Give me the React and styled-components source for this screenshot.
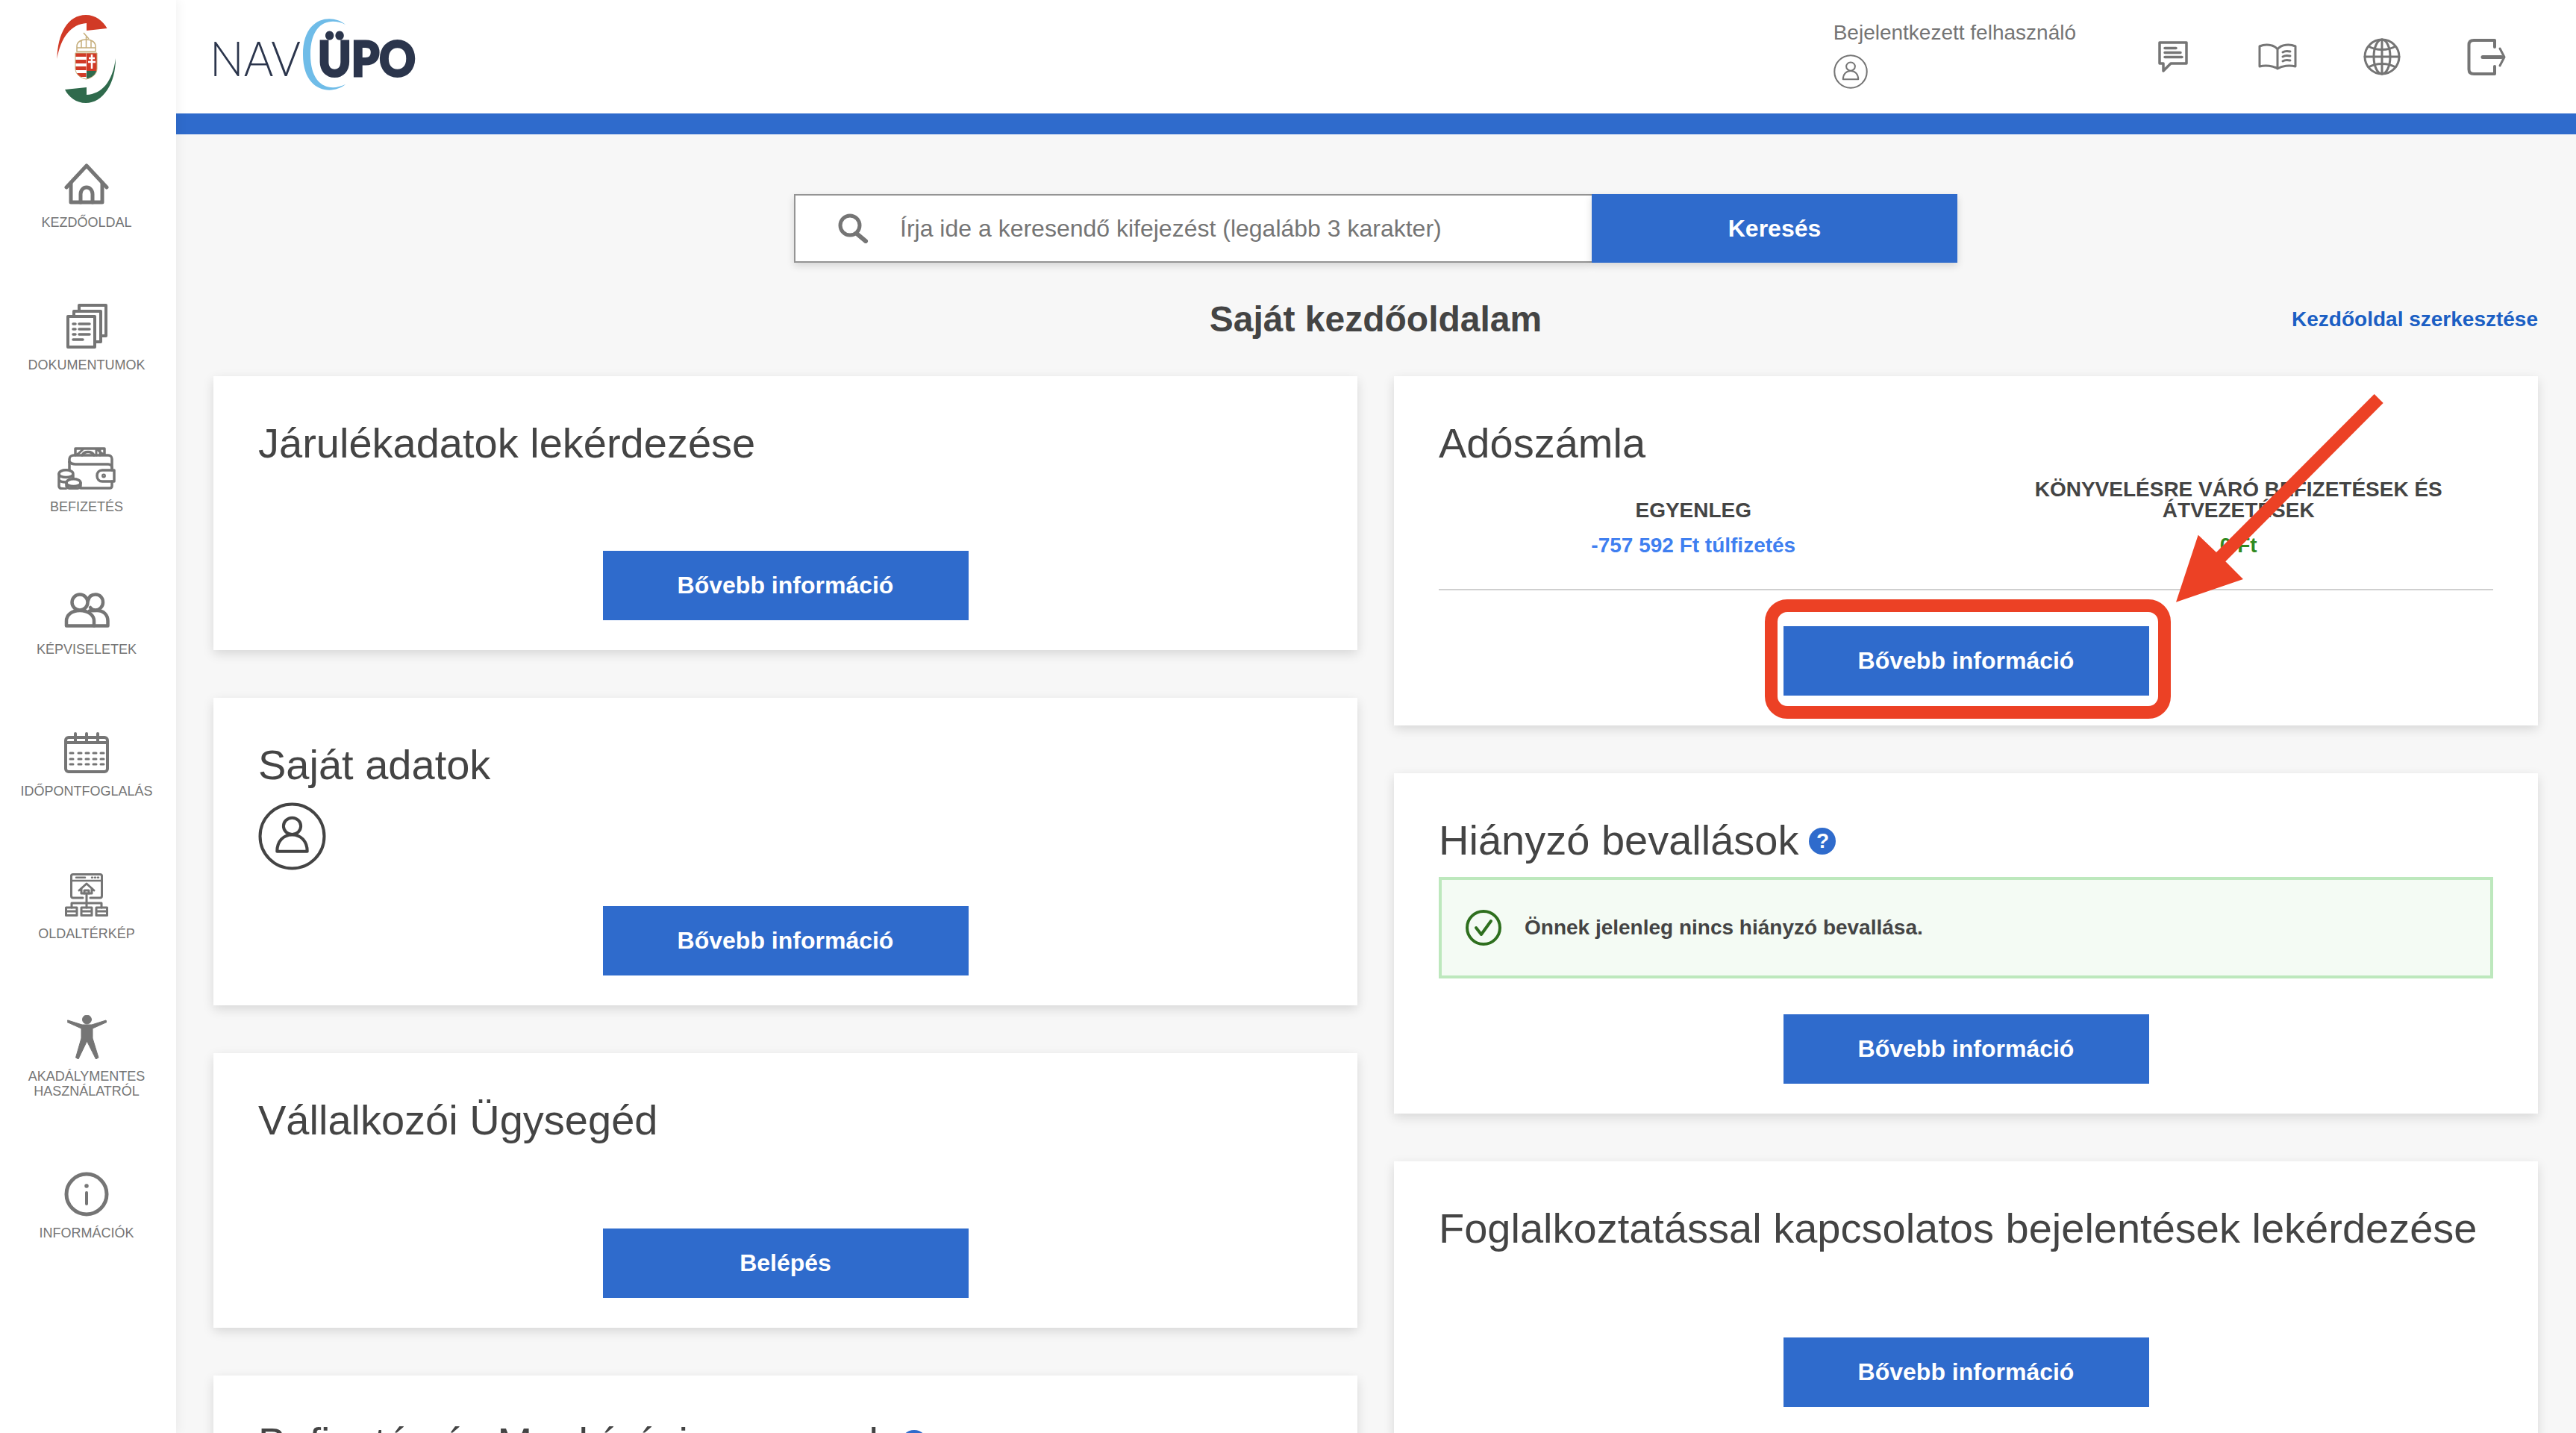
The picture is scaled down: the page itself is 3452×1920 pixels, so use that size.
import React from 'react'
import styled, { createGlobalStyle } from 'styled-components'

const GlobalStyle = createGlobalStyle`
html, body {
  margin: 0;
  padding: 0;
  background: #f7f7f7;
}
* {
  box-sizing: border-box;
}
`

const Page = styled.div`
width: 3452px;
height: 1920px;
overflow: hidden;
display: flex;
font-family: "Liberation Sans", Arial, sans-serif;
color: #444;
background: #f7f7f7;
`

const Sidebar = styled.aside`
width: 236px;
flex: none;
background: #fff;
box-shadow: 3px 0 14px rgba(0, 0, 0, 0.05);
padding: 20px 4px 0 0;
display: flex;
flex-direction: column;
align-items: center;
z-index: 2;
`

const Crest = styled.svg`
width: 80px;
height: 118px;
margin-bottom: 78px;
flex: none;
`

const NavList = styled.nav`
display: flex;
flex-direction: column;
align-items: center;
gap: 98.6px;
`

const NavItem = styled.a`
width: 232px;
display: flex;
flex-direction: column;
align-items: center;
gap: 12px;
color: #757575;
text-decoration: none;
`

const NavIcon = styled.div`
height: 60px;
display: flex;
align-items: center;
justify-content: center;
color: #757575;
`

const NavLabel = styled.span`
font-size: 18px;
line-height: 20px;
text-align: center;
text-transform: uppercase;
color: #757575;
`

const Main = styled.div`
flex: 1;
min-width: 0;
display: flex;
flex-direction: column;
`

const Header = styled.header`
height: 152px;
flex: none;
background: #fff;
padding: 0 50px 0 49px;
display: flex;
align-items: center;
justify-content: space-between;
`

const Logo = styled.svg`
width: 276px;
height: 104px;
margin-top: -4px;
overflow: visible;
`

const HeaderRight = styled.div`
display: flex;
align-items: center;
gap: 60px;
`

const UserBlock = styled.div`
display: flex;
flex-direction: column;
align-items: flex-start;
gap: 13px;
color: #757575;
font-size: 28px;
line-height: 32px;
margin-top: -6px;
`

const HeaderIcons = styled.div`
display: flex;
`

const HeaderIcon = styled.a`
width: 140px;
display: flex;
align-items: center;
justify-content: center;
color: #757575;
`

const BlueBar = styled.div`
height: 28px;
flex: none;
background: #2f6bcc;
`

const Content = styled.main`
flex: 1;
padding: 80px 51px 0 50px;
background: #f7f7f7;
`

const SearchRow = styled.form`
display: flex;
justify-content: center;
`

const SearchBox = styled.div`
width: 1069px;
height: 92px;
background: #fff;
border: 2px solid #949494;
border-right: none;
display: flex;
align-items: center;
padding-left: 57px;
gap: 42px;
box-shadow: 0 4px 10px rgba(0, 0, 0, 0.14);
color: #757575;
font-size: 32px;
`

const PrimaryButton = styled.button`
width: 490px;
height: 93px;
flex: none;
border: none;
padding: 0;
background: #2f6bcc;
color: #fff;
font-family: inherit;
font-size: 32px;
font-weight: 700;
`

const SearchButton = styled(PrimaryButton)`
height: 92px;
box-shadow: 0 4px 10px rgba(0, 0, 0, 0.14);
`

const TitleRow = styled.div`
height: 152px;
display: grid;
grid-template-columns: 1fr auto 1fr;
align-items: center;
`

const PageTitle = styled.h1`
grid-column: 2;
margin: 0;
font-size: 48px;
line-height: 56px;
font-weight: 700;
color: #444;
`

const EditLink = styled.a`
justify-self: end;
font-size: 28px;
font-weight: 700;
color: #1b5fc4;
`

const Columns = styled.div`
display: grid;
grid-template-columns: 1fr 1fr;
gap: 49px;
align-items: start;
`

const Column = styled.div`
display: flex;
flex-direction: column;
gap: 64px;
`

const Card = styled.section`
position: relative;
background: #fff;
padding: 56px 60px 40px;
box-shadow: 0 5px 14px rgba(0, 0, 0, 0.13);
`

const CardTitle = styled.h2`
margin: 0 0 -4px;
font-size: 56px;
line-height: 68px;
font-weight: 400;
color: #444;
display: flex;
align-items: center;
gap: 14px;
`

const HelpBadge = styled.span`
width: 36px;
height: 36px;
flex: none;
margin-top: 2px;
border-radius: 50%;
background: #2f6bcc;
color: #fff;
font-size: 28px;
line-height: 36px;
font-weight: 700;
text-align: center;
`

const Actions = styled.div`
margin-top: ${props => props.$gap}px;
display: flex;
justify-content: center;
`

const ButtonSlot = styled.div`
position: relative;
display: flex;
`

const RedFrame = styled.div`
position: absolute;
left: -25px;
right: -29px;
top: -36px;
bottom: -31px;
border: 17px solid #ec4125;
border-radius: 30px;
pointer-events: none;
`

const Arrow = styled.svg`
position: absolute;
left: 1040px;
top: 20px;
width: 290px;
height: 290px;
pointer-events: none;
`

const Avatar = styled.div`
margin-top: 20px;
height: 92px;
color: #444;
`

const Balance = styled.div`
margin-top: 18px;
padding-bottom: 44px;
border-bottom: 2px solid #cfcfcf;
display: grid;
grid-template-columns: 1fr 1fr;
gap: 48px;
align-items: end;
text-align: center;
`

const BalanceLabel = styled.div`
font-size: 28px;
line-height: 28px;
font-weight: 700;
color: #444;
text-transform: uppercase;
`

const BalanceValue = styled.div`
margin-top: 19px;
font-size: 28px;
line-height: 28px;
font-weight: 700;
color: ${props => props.$color};
`

const Notice = styled.div`
margin-top: 19px;
height: 136px;
border: 4px solid #bde8bd;
background: #f4fbf4;
padding-left: 32px;
display: flex;
align-items: center;
gap: 31px;
font-size: 28px;
font-weight: 700;
color: #444;
`

const Icon = styled.svg`
display: block;
fill: none;
stroke: currentColor;
stroke-linecap: round;
stroke-linejoin: round;
`

const HomeIcon = () => (
  <Icon width="60" height="55" viewBox="0 0 60 55" strokeWidth="5">
    <path d="M3 32 L30 3 L57 32" />
    <path d="M9 26 V52 H51 V26" />
    <path d="M22 52 V41 a8 9 0 0 1 16 0 V52" />
  </Icon>
)

const DocsIcon = () => (
  <Icon width="55" height="60" viewBox="0 0 55 60" strokeWidth="4" strokeLinejoin="miter">
    <path d="M2 17 H38 V58 H2 Z" />
    <path d="M10 15 V10 H46 V51 H40" />
    <path d="M17 8 V2 H53 V43 H48" />
    <path d="M9 27 H12 M17 27 H31 M9 34 H12 M17 34 H31 M9 41 H12 M17 41 H31 M9 48 H22" strokeWidth="3.5" />
  </Icon>
)

const WalletIcon = () => (
  <Icon width="78" height="57" viewBox="0 0 78 57" strokeWidth="3.5">
    <path d="M24 10 V2 H63 V10" />
    <path d="M24 11 C30 8 33 4 34 3 M63 10 C58 8 55 5 54 3 M52 3 V11 M57 3 V11" strokeWidth="3" />
    <path d="M33 11 C36 5 46 5 49 11" />
    <path d="M16 20 V16 C16 13 19 11 22 11 H68 C71 11 73 13 73 16 V31" />
    <path d="M16 20 C18 22 20 23 24 23 H68 C71 23 73 25 73 28" />
    <path d="M16 20 V31 M31 55 H70 C72 55 73 54 73 52 V46" />
    <path d="M60 31 H76 V46 H60 C56 46 53 43 53 38.5 C53 34 56 31 60 31 Z" />
    <circle cx="62" cy="38.5" r="1.2" />
    <path d="M2 36 C2 29 21 29 21 36 C21 42 2 42 2 36 Z" />
    <path d="M2 36 V52 C2 56 6 56 11 56 M21 38 V42 M2 44 C4 47 8 47 11 47" />
    <path d="M12 48 C12 41 31 41 31 48 C31 54 12 54 12 48 Z" />
    <path d="M12 48 V52 C12 57 31 57 31 52 V48" />
  </Icon>
)

const PeopleIcon = () => (
  <Icon width="61" height="47" viewBox="0 0 61 47" strokeWidth="4.5">
    <ellipse cx="21" cy="13" rx="10.5" ry="10.5" />
    <path d="M32 11 C33 5 37 2.500 42 2.500 C48 2.500 52 7 52 13 C52 19 47 23.500 42 23.500 C39 23.500 36.500 22 35 20" />
    <path d="M3 44.500 V38 C3 30 10 24 21 24 C32 24 40 30 40 38 V44.500 Z" />
    <path d="M34 24.500 C36 24 40 24 44 24 C53 24 58.500 30 58.500 38 V44.500 H40" />
  </Icon>
)

const CalendarIcon = () => (
  <Icon width="60" height="55" viewBox="0 0 60 55" strokeWidth="4">
    <rect x="2" y="7" width="56" height="46" rx="4" />
    <path d="M2 14 H58" />
    <path d="M15 2 V13 M30 2 V13 M45 2 V13" />
    <path d="M8 28 H12 M19 28 H23 M29 28 H33 M39 28 H43 M49 28 H53 M8 36 H12 M19 36 H23 M29 36 H33 M39 36 H43 M49 36 H53 M8 43 H12 M19 43 H23 M29 43 H33 M39 43 H43 M49 43 H53" strokeWidth="3" />
  </Icon>
)

const SitemapIcon = () => (
  <Icon width="58" height="58" viewBox="0 0 58 58" strokeWidth="3">
    <path d="M24 33 H11 C9.500 33 8.500 32 8.500 30.500 V3.500 C8.500 2 9.500 1.500 11 1.500 H47 C48.500 1.500 49.500 2 49.500 3.500 V30.500 C49.500 32 48.500 33 47 33 H34" />
    <path d="M8.500 10 H49.500 M15 5.700 H27 M36 5.700 H37 M40 5.700 H41 M44 5.700 H45" strokeWidth="2.500" />
    <path d="M19 23 L29 14 L39 23 M22 21 V27 H36 V21" />
    <path d="M26 27 V23 H32 V27" />
    <path d="M29 27 V46 M9 46 V40 H49 V46" />
    <path d="M1.500 46 H16 V56.500 H1.500 Z M22 46 H36 V56.500 H22 Z M42 46 H56.500 V56.500 H42 Z M1.500 51 H16 M22 51 H36 M42 51 H56.500" />
  </Icon>
)

const AccessIcon = () => (
  <Icon width="53" height="59" viewBox="0 0 53 59" stroke="none" style={{ fill: '#757575' }}>
    <circle cx="26.500" cy="6" r="6" />
    <path d="M1 7 L20 13 H33 L52 7 L53 9.500 L34 18 V31 L42 57 L38.500 59 L26.500 35 L15 59 L11.500 57 L19 31 V18 L0 9.500 Z" />
  </Icon>
)

const InfoIcon = () => (
  <Icon width="60" height="60" viewBox="0 0 60 60" strokeWidth="5">
    <circle cx="30" cy="30" r="27" />
    <path d="M30 28 V43" strokeWidth="4" />
    <circle cx="30" cy="19" r="1.500" strokeWidth="2.500" />
  </Icon>
)

const UserIcon = ({ size, weight }) => (
  <Icon width={size} height={size} viewBox="0 0 90 90" strokeWidth={weight}>
    <circle cx="45" cy="45" r="42.500" />
    <ellipse cx="45" cy="31.500" rx="11.500" ry="11" />
    <path d="M25 65 C25 52 33 43 45 43 C57 43 65 52 65 65 Z" />
  </Icon>
)

const ChatIcon = () => (
  <Icon width="40" height="42" viewBox="0 0 40 42" strokeWidth="3.500" strokeLinejoin="miter" strokeLinecap="butt">
    <path d="M2 2 H38 V30 H17 L7 40 V30 H2 Z" />
    <path d="M9 9.500 H24 M9 15.500 H30 M9 21.500 H32" />
  </Icon>
)

const BookIcon = () => (
  <Icon width="52" height="36" viewBox="0 0 52 36" strokeWidth="3">
    <path d="M26 8 C21 1 9 1 2 4 V31 C10 29 20 30 26 34 C32 30 42 29 50 31 V4 C43 1 31 1 26 8 V34" />
    <path d="M33 12 C36 10 39 10 43 11 M33 18 C36 16 39 16 43 17 M33 24 C36 22 39 22 43 23" />
  </Icon>
)

const GlobeIcon = () => (
  <Icon width="50" height="50" viewBox="0 0 50 50" strokeWidth="3">
    <circle cx="25" cy="25" r="23" />
    <ellipse cx="25" cy="25" rx="11" ry="23" />
    <path d="M25 2 V48 M2 25 H48" />
    <path d="M7 11 C17 17 33 17 43 11 M7 39 C17 33 33 33 43 39" />
  </Icon>
)

const ExitIcon = () => (
  <Icon width="52" height="51" viewBox="0 0 52 51" strokeWidth="4">
    <path d="M37 12 V3 H9 C5 3 2.500 5 2.500 9 V42 C2.500 46 5 48 9 48 H37 V38" />
    <path d="M21 25.500 H46" strokeWidth="5" />
    <path d="M44 14 L50 25.500 L44 37" strokeWidth="3" />
  </Icon>
)

const SearchIcon = () => (
  <Icon width="41" height="40" viewBox="0 0 41 40" strokeWidth="5">
    <circle cx="16" cy="16" r="13" />
    <path d="M25 27 L37 37" strokeWidth="6" />
  </Icon>
)

const CheckIcon = () => (
  <Icon width="48" height="48" viewBox="0 0 48 48" strokeWidth="4" style={{ color: '#2e6f1e', flex: 'none' }}>
    <circle cx="24" cy="24" r="22" />
    <path d="M14 24 L21 33 L34 15" />
  </Icon>
)

const navItems = [
  { label: 'Kezdőoldal', icon: <HomeIcon /> },
  { label: 'Dokumentumok', icon: <DocsIcon /> },
  { label: 'Befizetés', icon: <WalletIcon /> },
  { label: 'Képviseletek', icon: <PeopleIcon /> },
  { label: 'Időpontfoglalás', icon: <CalendarIcon /> },
  { label: 'Oldaltérkép', icon: <SitemapIcon /> },
  { label: <>Akadálymentes<br />használatról</>, icon: <AccessIcon /> },
  { label: 'Információk', icon: <InfoIcon /> },
]

const headerIcons = [<ChatIcon />, <BookIcon />, <GlobeIcon />, <ExitIcon />]

const CrestLogo = () => (
  <Crest viewBox="0 0 80 118">
    <defs>
      <clipPath id="shield">
        <path d="M25 51 H54 V72 C54 80 46 85 39.500 86 C33 85 25 80 25 72 Z" />
      </clipPath>
    </defs>
    <path fill="#d13a26" d="M0.500 59 C1 25 15 0 39 0 C52 0 62 8 67.500 18 L40 21 V11 C20 12 5 30 0.500 59 Z" />
    <path fill="#2f6a4c" d="M79 58 C79 92 62 118 39 118 C26 118 16 110 11 100 L40 97 V107 C60 106 75 90 79 58 Z" />
    <g fill="none" stroke="#c5ad7a" strokeWidth="1.500">
      <path d="M27 49 V42 C27 36 33 33 39.500 33 C46 33 52 36 52 42 V49 Z" />
      <path d="M33 34 V44 M39.500 33 V44 M46 34 V44 M27 44 H52 M39.500 33 V29 M36 24 L43 32" />
    </g>
    <g clipPath="url(#shield)">
      <rect x="25" y="51" width="29" height="35" fill="#fff" />
      <rect x="25" y="51" width="14.500" height="5" fill="#d13a26" />
      <rect x="25" y="60" width="14.500" height="5" fill="#d13a26" />
      <rect x="25" y="69" width="14.500" height="5" fill="#d13a26" />
      <rect x="25" y="78" width="14.500" height="5" fill="#d13a26" />
      <rect x="40" y="51" width="14" height="24" fill="#d13a26" />
      <rect x="40" y="75" width="14" height="11" fill="#2f6a4c" />
      <path d="M47 53 V72 M43 58 H51 M42 63 H52" stroke="#fff" strokeWidth="2.500" />
    </g>
    <path d="M25 51 H54 V72 C54 80 46 85 39.500 86 C33 85 25 80 25 72 Z" fill="none" stroke="#c5ad7a" strokeWidth="1" />
  </Crest>
)

const UpoLogo = () => (
  <Logo viewBox="0 0 276 104">
    <text x="-4" y="80" fontFamily="Lato, sans-serif" fontWeight="300" fontSize="65" fill="#2b354c" textLength="122" lengthAdjust="spacingAndGlyphs">NAV</text>
    <path fill="#6fbce8" d="M178 11 C160 -4 121 0 121 51 C121 102 160 106 178 91 C155 102 131 92 131 51 C131 10 155 0 178 11 Z" />
    <text x="141" y="80" fontFamily="Lato, sans-serif" fontWeight="900" fontSize="65" fill="#2b354c" stroke="#2b354c" strokeWidth="3" textLength="131" lengthAdjust="spacingAndGlyphs">ÜPO</text>
  </Logo>
)

const MoreButton = ({ gap, children = 'Bővebb információ' }) => (
  <Actions $gap={gap}>
    <PrimaryButton type="button">{children}</PrimaryButton>
  </Actions>
)

const App = () => (
  <Page lang="hu">
    <GlobalStyle />
    <Sidebar>
      <CrestLogo />
      <NavList>
        {navItems.map((item, i) => (
          <NavItem key={i}>
            <NavIcon>{item.icon}</NavIcon>
            <NavLabel>{item.label}</NavLabel>
          </NavItem>
        ))}
      </NavList>
    </Sidebar>
    <Main>
      <Header>
        <UpoLogo />
        <HeaderRight>
          <UserBlock>
            Bejelentkezett felhasználó
            <UserIcon size={46} weight={4} />
          </UserBlock>
          <HeaderIcons>
            {headerIcons.map((icon, i) => (
              <HeaderIcon key={i}>{icon}</HeaderIcon>
            ))}
          </HeaderIcons>
        </HeaderRight>
      </Header>
      <BlueBar />
      <Content>
        <SearchRow>
          <SearchBox>
            <SearchIcon />
            Írja ide a keresendő kifejezést (legalább 3 karakter)
          </SearchBox>
          <SearchButton type="button">Keresés</SearchButton>
        </SearchRow>
        <TitleRow>
          <PageTitle>Saját kezdőoldalam</PageTitle>
          <EditLink>Kezdőoldal szerkesztése</EditLink>
        </TitleRow>
        <Columns>
          <Column>
            <Card>
              <CardTitle>Járulékadatok lekérdezése</CardTitle>
              <MoreButton gap={114} />
            </Card>
            <Card>
              <CardTitle>Saját adatok</CardTitle>
              <Avatar>
                <UserIcon size={91} weight={4} />
              </Avatar>
              <MoreButton gap={47} />
            </Card>
            <Card>
              <CardTitle>Vállalkozói Ügysegéd</CardTitle>
              <MoreButton gap={115}>Belépés</MoreButton>
            </Card>
            <Card>
              <CardTitle>Befizetés és Megbízási csomagok <HelpBadge>?</HelpBadge></CardTitle>
              <MoreButton gap={115} />
            </Card>
          </Column>
          <Column>
            <Card>
              <CardTitle>Adószámla</CardTitle>
              <Balance>
                <div>
                  <BalanceLabel>Egyenleg</BalanceLabel>
                  <BalanceValue $color="#3f7ff0">-757 592 Ft túlfizetés</BalanceValue>
                </div>
                <div>
                  <BalanceLabel>Könyvelésre váró befizetések és átvezetések</BalanceLabel>
                  <BalanceValue $color="#2f8a1f">0 Ft</BalanceValue>
                </div>
              </Balance>
              <Actions $gap={48}>
                <ButtonSlot>
                  <PrimaryButton type="button">Bővebb információ</PrimaryButton>
                  <RedFrame />
                </ButtonSlot>
              </Actions>
              <Arrow viewBox="0 0 290 290">
                <polygon fill="#ec4125" points="273.700,4 285.700,16 74.300,228.300 98,252 8,282.700 37.700,192.700 62,216" />
              </Arrow>
            </Card>
            <Card>
              <CardTitle>Hiányzó bevallások <HelpBadge>?</HelpBadge></CardTitle>
              <Notice>
                <CheckIcon />
                Önnek jelenleg nincs hiányzó bevallása.
              </Notice>
              <MoreButton gap={48} />
            </Card>
            <Card>
              <CardTitle>Foglalkoztatással kapcsolatos bejelentések lekérdezése</CardTitle>
              <MoreButton gap={116} />
            </Card>
          </Column>
        </Columns>
      </Content>
    </Main>
  </Page>
)

export default App
